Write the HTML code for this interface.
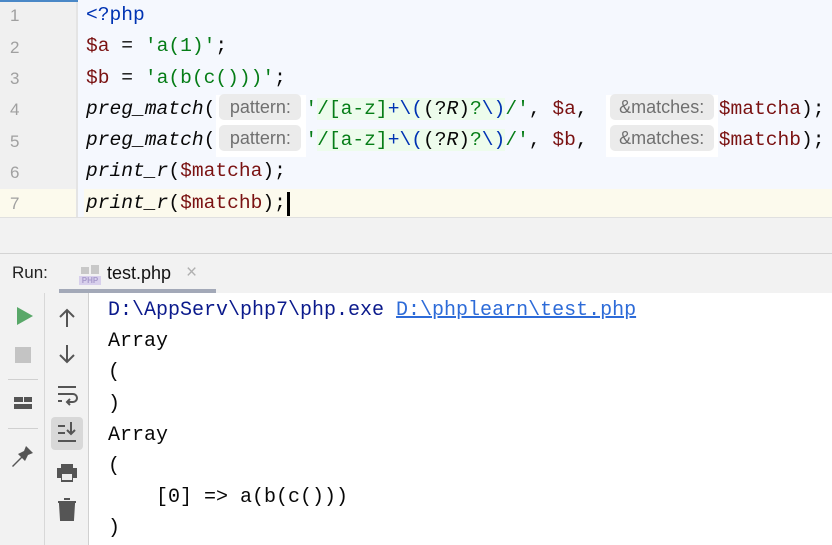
<!DOCTYPE html>
<html><head><meta charset="utf-8"><style>
*{margin:0;padding:0;box-sizing:border-box}
body{width:832px;height:545px;overflow:hidden;background:#fff;position:relative;font-family:"Liberation Sans",sans-serif}
.abs{position:absolute}
.mono{font-family:"Liberation Mono",monospace;white-space:pre}
.code{font-size:19.6px;line-height:31.3px;color:#080808}
.ln{font-family:"Liberation Sans",sans-serif;font-size:17px;color:#a0a0a0;position:absolute;left:10px}
.v{color:#7a1212}.s{color:#067d17}.k{color:#0033b3}.i{font-style:italic}
.re{background:#edfcec}
.hint{display:inline-block;background:#ebebeb;color:#707070;font-family:"Liberation Sans",sans-serif;font-size:18px;border-radius:5px;height:26px;line-height:26px;vertical-align:1px;text-align:center}
.con{font-size:20px;line-height:31.2px;color:#080808}
</style></head><body>
<div class="abs" style="left:0;top:0;width:76px;height:217px;background:#f0f0f0"></div>
<div class="abs" style="left:76px;top:0;width:2px;height:217px;background:#e4e4e4"></div>
<div class="abs" style="left:0;top:0;width:150px;height:2px;background:#4a88c7"></div>
<div class="abs" style="left:78px;top:0;width:754px;height:217px;background:#f5f8fe"></div>
<div class="abs" style="left:0;top:189px;width:76px;height:28px;background:#fcfaed"></div>
<div class="abs" style="left:84px;top:189px;width:748px;height:28px;background:#fcfaed"></div>
<div class="abs" style="left:216px;top:95px;width:90px;height:62px;background:#fff"></div>
<div class="abs" style="left:606px;top:95px;width:112px;height:62px;background:#fff"></div>
<div class="ln" style="top:6px">1</div><div class="ln" style="top:38px">2</div><div class="ln" style="top:69px">3</div><div class="ln" style="top:100px">4</div><div class="ln" style="top:132px">5</div><div class="ln" style="top:163px">6</div><div class="ln" style="top:194px">7</div>
<div class="abs mono code" style="left:86px;top:0"><span class="k">&lt;?php</span>
<span class="v">$a</span> = <span class="s">'a(1)'</span>;
<span class="v">$b</span> = <span class="s">'a(b(c()))'</span>;
<span class="i">preg_match</span>(<span class="hint" style="width:82px;margin:0 4px">pattern:</span><span class="s">'</span><span class="re"><span class="s">/[a-z]</span><span class="k">+\(</span>(?<span class="i">R</span>)<span class="s">?</span><span class="k">\)</span></span><span class="s">/'</span>, <span class="v">$a</span>,<span class="hint" style="width:104px;margin:0 5px 0 22px">&amp;matches:</span><span class="v">$matcha</span>);
<span class="i">preg_match</span>(<span class="hint" style="width:82px;margin:0 4px">pattern:</span><span class="s">'</span><span class="re"><span class="s">/[a-z]</span><span class="k">+\(</span>(?<span class="i">R</span>)<span class="s">?</span><span class="k">\)</span></span><span class="s">/'</span>, <span class="v">$b</span>,<span class="hint" style="width:104px;margin:0 5px 0 22px">&amp;matches:</span><span class="v">$matchb</span>);
<span class="i">print_r</span>(<span class="v">$matcha</span>);
<span class="i">print_r</span>(<span class="v">$matchb</span>);</div>
<div class="abs" style="left:287px;top:192px;width:3px;height:24px;background:#000"></div>
<div class="abs" style="left:0;top:217px;width:832px;height:36px;background:#f2f2f2;border-top:1px solid #e0e0e0"></div>
<div class="abs" style="left:0;top:253px;width:832px;height:40px;background:#f2f2f2;border-top:1px solid #d4d4d4"></div>
<div class="abs" style="left:12px;top:263px;font-size:17px;color:#222">Run:</div>
<div class="abs" style="left:79px;top:265px;width:22px;height:20px">
<div class="abs" style="left:0;top:11px;width:22px;height:9px;background:#d8d0ec;color:#a99ccc;font-size:8px;font-weight:bold;line-height:9px;text-align:center">PHP</div>
<div class="abs" style="left:2px;top:2px;width:8px;height:7px;background:#c8c8c8"></div>
<div class="abs" style="left:12px;top:0;width:8px;height:9px;background:#c8c8c8"></div></div>
<div class="abs" style="left:107px;top:263px;font-size:18px;color:#111">test.php</div>
<div class="abs" style="left:186px;top:262px;font-size:19px;color:#b0b0b0">×</div>
<div class="abs" style="left:59px;top:289px;width:157px;height:4px;background:#a3a9b8"></div>
<div class="abs" style="left:0;top:293px;width:88px;height:252px;background:#f2f2f2"></div>
<div class="abs" style="left:44px;top:293px;width:1px;height:252px;background:#d8d8d8"></div>
<div class="abs" style="left:88px;top:293px;width:1px;height:252px;background:#d0d0d0"></div>
<div class="abs" style="left:8px;top:379px;width:30px;height:1px;background:#d0d0d0"></div>
<div class="abs" style="left:8px;top:428px;width:30px;height:1px;background:#d0d0d0"></div>
<svg class="abs" style="left:0;top:293px" width="88" height="252">
<polygon points="17,14 33,23 17,32" fill="#59a869"/>
<rect x="15" y="54" width="16" height="16" fill="#c4c4c4"/>
<rect x="14" y="104" width="9" height="5" fill="#555"/><rect x="24" y="104" width="8" height="5" fill="#555"/><rect x="14" y="111" width="18" height="5" fill="#555"/>
<path d="M25 152 l8 8 -5 2 -3 6 -3 -3 -9 9 -1 -1 9 -9 -3 -3 6 -3 2 -5z" fill="#555"/>
<path d="M67 17v17M60 24l7-7 7 7" stroke="#555" stroke-width="2" fill="none"/>
<path d="M67 52v17M60 62l7 7 7-7" stroke="#555" stroke-width="2" fill="none"/>
<path d="M58 94h18M58 101h15a4 4 0 0 1 0 8h-6M70 106l-3 3 3 3M58 108h4" stroke="#555" stroke-width="2" fill="none"/>
<rect x="51" y="124" width="32" height="33" rx="4" fill="#d8d8d8"/>
<path d="M58 133h7M58 140h7M71 129v12M67 137l4 4 4-4M58 148h18" stroke="#555" stroke-width="2" fill="none"/>
<path d="M61 171h12v4h4v10h-4v4h-12v-4h-4v-10h4z" fill="#555"/><rect x="62" y="181" width="10" height="6" fill="#eee"/>
<path d="M58 209h18M64 206h6M60 211h14l-1 16h-12z" stroke="#555" stroke-width="2" fill="#555"/>
</svg>
<div class="abs mono con" style="left:108px;top:295px"><span style="color:#0b1a8c">D:\AppServ\php7\php.exe </span><span style="color:#2d6bd8;text-decoration:underline">D:\phplearn\test.php</span>
Array
(
)
Array
(
    [0] =&gt; a(b(c()))
)</div>
</body></html>
